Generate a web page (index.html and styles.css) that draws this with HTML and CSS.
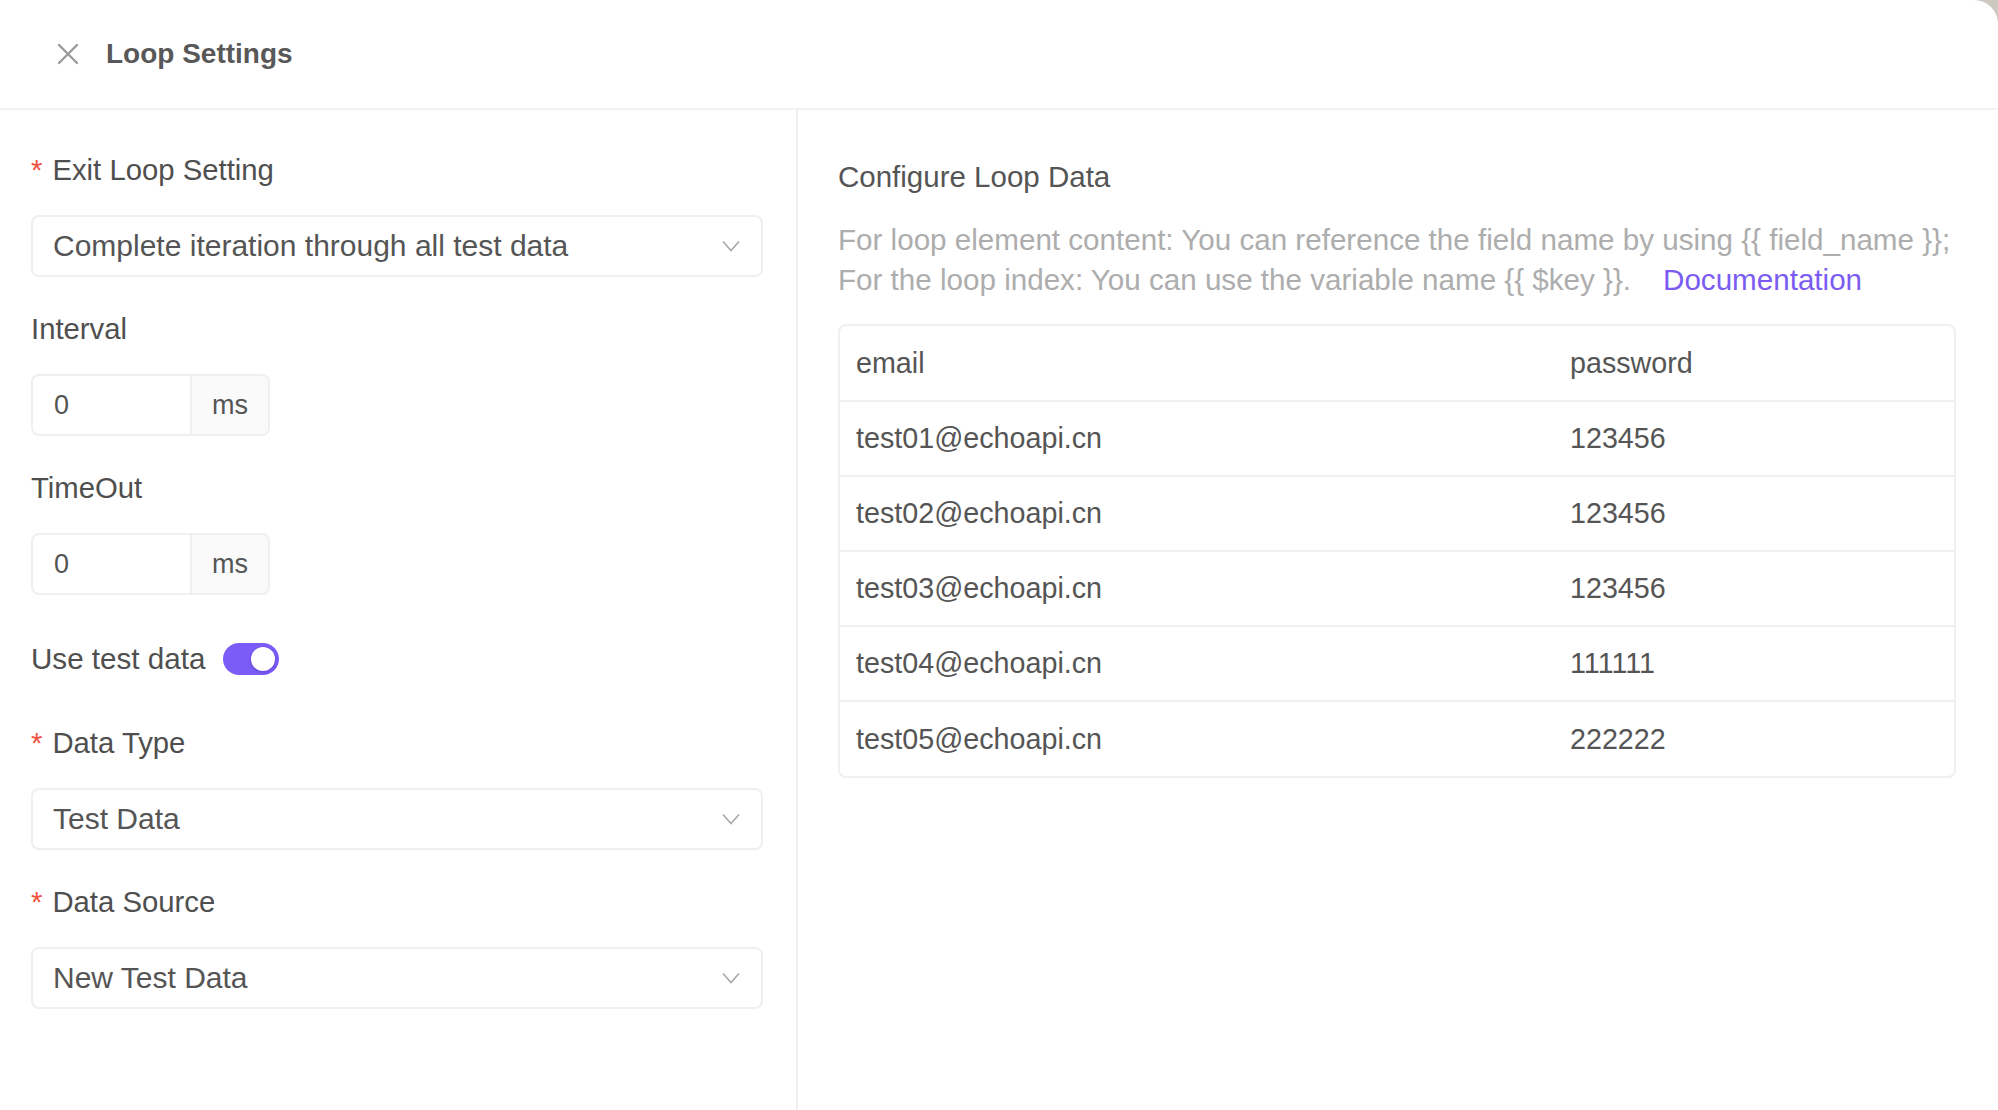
FILE: index.html
```html
<!DOCTYPE html>
<html lang="en">
<head>
<meta charset="utf-8">
<title>Loop Settings</title>
<link rel="stylesheet" href="styles.css">
</head>
<body>
<div class="modal">
  <header class="modal-header">
    <button class="close-btn" aria-label="Close">
      <svg width="22" height="22" viewBox="0 0 22 22"><path d="M2 2 L20 20 M20 2 L2 20" stroke="#9a9a9a" stroke-width="2.4" stroke-linecap="round" fill="none"/></svg>
    </button>
    <h1 class="modal-title">Loop Settings</h1>
  </header>
  <div class="modal-body">
    <section class="left-pane">
      <div class="form-item">
        <div class="form-label"><span class="req">*</span>Exit Loop Setting</div>
        <div class="select">
          <span>Complete iteration through all test data</span>
          <svg class="chevron" width="18" height="12" viewBox="0 0 18 12"><polyline points="1,1.5 9,10.5 17,1.5" fill="none" stroke="#a8a8a8" stroke-width="1.6"/></svg>
        </div>
      </div>
      <div class="form-item">
        <div class="form-label">Interval</div>
        <div class="input-group">
          <div class="input">0</div>
          <div class="addon">ms</div>
        </div>
      </div>
      <div class="form-item">
        <div class="form-label">TimeOut</div>
        <div class="input-group">
          <div class="input">0</div>
          <div class="addon">ms</div>
        </div>
      </div>
      <div class="form-item switch-row">
        <span class="switch-label">Use test data</span>
        <span class="switch"><span class="knob"></span></span>
      </div>
      <div class="form-item">
        <div class="form-label"><span class="req">*</span>Data Type</div>
        <div class="select">
          <span>Test Data</span>
          <svg class="chevron" width="18" height="12" viewBox="0 0 18 12"><polyline points="1,1.5 9,10.5 17,1.5" fill="none" stroke="#a8a8a8" stroke-width="1.6"/></svg>
        </div>
      </div>
      <div class="form-item">
        <div class="form-label"><span class="req">*</span>Data Source</div>
        <div class="select">
          <span>New Test Data</span>
          <svg class="chevron" width="18" height="12" viewBox="0 0 18 12"><polyline points="1,1.5 9,10.5 17,1.5" fill="none" stroke="#a8a8a8" stroke-width="1.6"/></svg>
        </div>
      </div>
    </section>
    <section class="right-pane">
      <div class="section-title">Configure Loop Data</div>
      <p class="desc">For loop element content: You can reference the field name by using {{ field_name }};<br>For the loop index: You can use the variable name {{ $key }}.<a class="doc-link" href="#">Documentation</a></p>
      <div class="table-wrap">
        <table class="data-table">
          <thead>
            <tr><th class="col-email">email</th><th>password</th></tr>
          </thead>
          <tbody>
            <tr><td>test01@echoapi.cn</td><td>123456</td></tr>
            <tr><td>test02@echoapi.cn</td><td>123456</td></tr>
            <tr><td>test03@echoapi.cn</td><td>123456</td></tr>
            <tr><td>test04@echoapi.cn</td><td>111111</td></tr>
            <tr><td>test05@echoapi.cn</td><td>222222</td></tr>
          </tbody>
        </table>
      </div>
    </section>
  </div>
</div>
</body>
</html>
```
FILE: styles.css
```css
* { box-sizing: border-box; }

html, body {
  margin: 0;
  padding: 0;
}

body {
  background: #cdc8c1;
  font-family: "Liberation Sans", Arial, sans-serif;
  color: #555;
  width: 1998px;
  height: 1110px;
  overflow: hidden;
}

.modal {
  background: #fff;
  border-top-right-radius: 24px;
  height: 1110px;
  display: flex;
  flex-direction: column;
}

.modal-header {
  height: 110px;
  flex: none;
  border-bottom: 2px solid #f2f2f2;
  display: flex;
  align-items: center;
  padding-left: 57px;
  gap: 27px;
}

.close-btn {
  border: 0;
  background: none;
  padding: 0;
  width: 22px;
  height: 22px;
  display: flex;
  cursor: pointer;
}

.modal-title {
  margin: 0;
  font-size: 28px;
  font-weight: bold;
  color: #585858;
  line-height: 40px;
}

.modal-body {
  flex: 1;
  display: flex;
}

.left-pane {
  width: 798px;
  flex: none;
  border-right: 2px solid #f0f0f0;
  padding: 40px 33px 0 31px;
}

.form-item {
  margin-bottom: 32px;
}

.form-label {
  height: 40px;
  line-height: 40px;
  font-size: 29.3px;
  color: #4f4f4f;
  margin-bottom: 25px;
  display: flex;
}

.req {
  color: #f0533f;
  margin-right: 10px;
}

.select {
  height: 62px;
  border: 2px solid #efefef;
  border-radius: 8px;
  padding: 0 21px 0 20px;
  display: flex;
  align-items: center;
  justify-content: space-between;
  font-size: 30px;
  color: #555;
}

.chevron {
  flex: none;
}

.input-group {
  display: flex;
  width: 239px;
  height: 62px;
  border: 2px solid #efefef;
  border-radius: 8px;
  overflow: hidden;
  font-size: 27px;
  color: #555;
}

.input {
  width: 157px;
  padding-left: 21px;
  display: flex;
  align-items: center;
}

.addon {
  flex: 1;
  background: #fafafa;
  border-left: 2px solid #efefef;
  display: flex;
  align-items: center;
  justify-content: center;
}

.switch-row {
  height: 64px;
  display: flex;
  align-items: center;
  gap: 18px;
}

.switch-label {
  font-size: 29.6px;
  color: #4f4f4f;
}

.switch {
  width: 56px;
  height: 32px;
  border-radius: 16px;
  background: #7b5cf7;
  display: flex;
  align-items: center;
  justify-content: flex-end;
  padding-right: 4px;
}

.knob {
  width: 24px;
  height: 24px;
  border-radius: 50%;
  background: #fff;
  box-shadow: 0 1px 3px rgba(40, 20, 120, 0.35);
}

.right-pane {
  flex: 1;
  padding: 47px 42px 0 40px;
}

.section-title {
  font-size: 29.5px;
  line-height: 40px;
  color: #555;
  margin-bottom: 23px;
}

.desc {
  margin: 0 0 24px;
  font-size: 29.6px;
  line-height: 40px;
  color: #adadad;
  white-space: nowrap;
}

.doc-link {
  color: #7b5cf2;
  text-decoration: none;
  margin-left: 32px;
}

.table-wrap {
  border: 2px solid #f0f0f0;
  border-radius: 8px;
  overflow: hidden;
}

.data-table {
  width: 100%;
  border-collapse: collapse;
  font-size: 28.7px;
  color: #555;
}

.data-table th,
.data-table td {
  height: 75px;
  padding: 0 16px;
  text-align: left;
  font-weight: normal;
  border-bottom: 2px solid #f0f0f0;
}

.data-table tbody tr:last-child td {
  border-bottom: 0;
}

.col-email {
  width: 714px;
}
```
